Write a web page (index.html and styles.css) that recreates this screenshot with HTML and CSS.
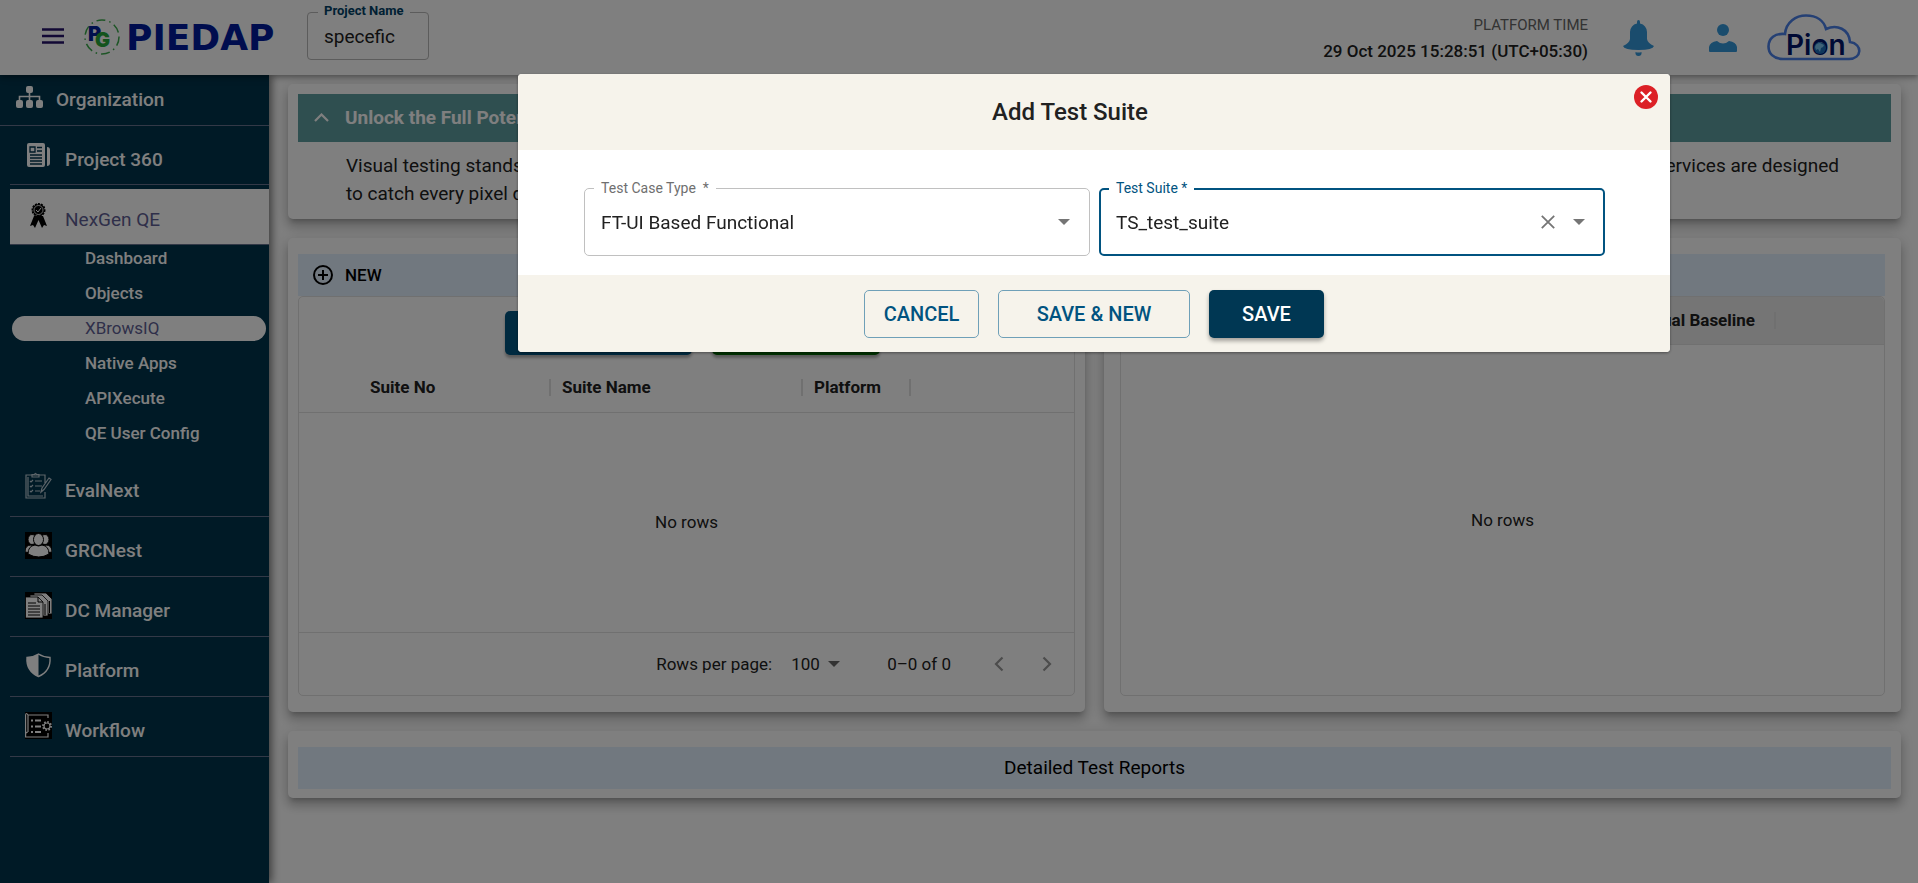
FILE: index.html
```html
<!DOCTYPE html>
<html lang="en">
<head>
<meta charset="utf-8">
<title>PIEDAP - XBrowsIQ</title>
<link rel="stylesheet" href="styles.css">
</head>
<body>
<header class="topbar">
  <button class="icon-btn menu" aria-label="Menu">
    <svg width="22" height="16" viewBox="0 0 22 16"><path d="M0 1.5h22M0 8h22M0 14.5h22" stroke="#24126a" stroke-width="2.4"/></svg>
  </button>
  <a class="brand" href="#" aria-label="PIEDAP">
    <svg width="200" height="44" viewBox="0 0 200 44">
      <circle cx="18" cy="21" r="17" fill="none" stroke="#3cab4c" stroke-width="1.5" stroke-dasharray="9 4 1.500 4"/>
      <text x="4" y="25" class="mark mark-p">P</text>
      <text x="11" y="31" class="mark mark-g">G</text>
      <text x="42" y="34" class="wordmark">PIEDAP</text>
    </svg>
  </a>
  <div class="project">
    <label for="project">Project Name</label>
    <input id="project" type="text" value="specefic">
  </div>
  <div class="clock"><span class="clock-label">PLATFORM TIME</span><span class="clock-value">29 Oct 2025 15:28:51 (UTC+05:30)</span></div>
  <button class="icon-btn bell" aria-label="Notifications">
    <svg width="31" height="36" viewBox="0 0 31 36"><path fill="#3498db" d="M14 2Q14 0 15.500 0T17 2V3.500Q23.500 5 24 12V19Q24.500 23 31 26Q30 30 15.500 30T0 26Q6.500 23 7 19V12Q7.500 5 14 3.500ZM12.500 32Q15.500 33 18.500 32Q19 36 15.500 36T12.500 32Z"/></svg>
  </button>
  <button class="icon-btn user" aria-label="Account">
    <svg width="28" height="28" viewBox="0 0 28 28"><circle cx="14" cy="6" r="6" fill="#3498db"/><path fill="#3498db" d="M0 27V23Q1 18 8 17Q14 22 20 17Q27 18 28 23V27Q28 28 27 28H1Q0 28 0 27Z"/></svg>
  </button>
  <svg class="pion" width="94" height="47" viewBox="0 0 94 47" role="img" aria-label="Pion">
    <path fill="none" stroke="#4a80e8" stroke-width="2.600" d="M16 45C6 45 1.500 39 1.500 32.500C1.500 24 8 19 18 20C19 8 29 1.500 39 1.500C50 1.500 57 7 59 15C70 10 82 15 83 28C96 30 95 45 82 45Z"/>
    <text x="19" y="41" class="pion-text">Pion</text>
    <circle cx="53" cy="34" r="6" fill="#1d6fb8"/><path d="M48 33q1-4 5-4l4 2-1 2-2 1-1 4-2-3-2 1z" fill="#7cc4f0"/>
  </svg>
</header>

<div class="shell">
  <nav class="sidebar">
    <a class="nav-org" href="#">
      <svg width="27" height="22" viewBox="0 0 27 22" fill="#fff"><rect x="10" width="7" height="7" rx="2"/><rect y="14" width="7" height="8" rx="2"/><rect x="10" y="14" width="7" height="8" rx="2"/><rect x="20" y="14" width="7" height="8" rx="2"/><path d="M13.500 6v9M3.500 15v-4.500h20V15" fill="none" stroke="#fff" stroke-width="1.600"/></svg>
      <span>Organization</span>
    </a>
    <a class="nav-item" href="#">
      <svg width="27" height="27" viewBox="0 0 27 27"><rect x="2" y="2" width="18" height="24" rx="2" fill="#fff"/><path d="M22 6q3 0 3 3v13q0 3-3 3z" fill="#fff"/><path d="M5 6h5v5H5zM12 6.500h5M12 10h5M5 14h12M5 17h12M5 20h12M5 23h12" fill="none" stroke="#00344e" stroke-width="1.300"/></svg>
      <span>Project 360</span>
    </a>
    <a class="nav-item active" href="#">
      <svg width="27" height="27" viewBox="0 0 27 27"><path d="M9 14L5 24l3-1 2 3 3.500-8 3.500 8 2-3 3 1-4-10z"/><circle cx="13.500" cy="8" r="6" stroke="#000" stroke-width="2" stroke-dasharray="2 1"/><circle cx="13.500" cy="8" r="4.500" fill="none" stroke="#fff" stroke-width=".8"/><path d="M11 8l2 2 3-4" stroke="#fff" fill="none"/></svg>
      <span>NexGen QE</span>
    </a>
    <div class="subnav">
      <a href="#">Dashboard</a><a href="#">Objects</a><a class="current" href="#">XBrowsIQ</a><a href="#">Native Apps</a><a href="#">APIXecute</a><a href="#">QE User Config</a>
    </div>
    <a class="nav-item" href="#">
      <svg width="27" height="27" viewBox="0 0 27 27" fill="none" stroke="#b8c8d2" stroke-width="1.200"><path d="M20 20v6H1V3h19v8M7 5V2.500h2.500q1-2.500 2 0H14V5zM3 5v19h15M5 9l1 1 2-2M10 9h7M5 14l1 1 2-2M10 14h7M5 19l1 1 2-2M10 19h5M16 20l1-4 7-10 2 1.500-7 10z"/></svg>
      <span>EvalNext</span>
    </a>
    <a class="nav-item" href="#">
      <svg width="27" height="27" viewBox="0 0 27 27"><path d="M0 0h27v27H0z"/><g fill="#fff" stroke="#000"><ellipse cx="7" cy="7.500" rx="4" ry="5"/><ellipse cx="20" cy="7.500" rx="4" ry="5"/><path d="M0 20q0-7 6-7l4 2-4 6zM27 20q0-7-6-7l-4 2 4 6z"/><ellipse cx="13.500" cy="7.500" rx="5" ry="6"/><path d="M3 22q0-8 7-9 3.500 2 7 0 7 1 7 9-10 6-21 0z"/></g></svg>
      <span>GRCNest</span>
    </a>
    <a class="nav-item" href="#">
      <svg width="27" height="27" viewBox="0 0 27 27"><path d="M0 0h27v27H0z"/><g fill="#fff" stroke="#000" stroke-width=".8"><path d="M9 1h12l6 6v15H9z"/><path d="M5 3h12l6 6v15H5z"/><path d="M.5 5H13l5 5v16H.5z"/></g><path d="M13 5v5h5M3 11h8M3 14h12M3 17h12M3 20h12M3 23h12M20 12v11M24.500 9v12" fill="none" stroke="#000"/></svg>
      <span>DC Manager</span>
    </a>
    <a class="nav-item" href="#">
      <svg width="27" height="27" viewBox="0 0 27 27"><path d="M13.500 2Q18 5 25 5.500Q26 19 13.500 24.500Q1 19 2 5.500Q9 5 13.500 2Z" fill="none" stroke="#fff" stroke-width="1.400"/><path d="M13.500 2v22.500Q1 19 2 5.500Q9 5 13.500 2Z" fill="#fff"/></svg>
      <span>Platform</span>
    </a>
    <a class="nav-item" href="#">
      <svg width="27" height="27" viewBox="0 0 27 27"><path d="M0 0h27v27H0z"/><g fill="none" stroke="#fff" stroke-width="1.200"><path d="M23 6V3H3v17M3 3Q1 0 .6 3v22H23v-4M3 20q-2.500 0-2.500 3"/><path d="M6 8.500h2M10 8.500h6M6 14.500h2M10 14.500h6M6 20h2M10 20h6" stroke-width="1.800"/><circle cx="22" cy="14" r="3"/><circle cx="22" cy="14" r="4" stroke-dasharray="1.600 1.500" stroke-width="2"/></g></svg>
      <span>Workflow</span>
    </a>
  </nav>

  <main class="content">
    <section class="card intro">
      <button class="intro-head"><svg width="15" height="9" viewBox="0 0 15 9"><path d="M1 8l6.500-6.500L14 8" fill="none" stroke="#fff" stroke-width="2.200"/></svg><span>Unlock the Full Potential</span></button>
      <div class="intro-body">
        <p class="spread"><span>Visual testing stands out</span><span>services are designed</span></p>
        <p>to catch every pixel detail.</p>
      </div>
    </section>

    <div class="columns">
      <section class="card suites">
        <div class="band"><button class="new-btn"><svg width="20" height="20" viewBox="0 0 20 20" fill="none" stroke="#000" stroke-width="2"><circle cx="10" cy="10" r="9"/><path d="M10 5v10M5 10h10"/></svg>NEW</button></div>
        <div class="grid">
          <div class="toolbar"><button class="tool blue" aria-label="Add suite"></button><button class="tool green" aria-label="Run suite"></button></div>
          <table class="suite-table">
            <colgroup><col class="c-no"><col class="c-name"><col class="c-platform"><col></colgroup>
            <thead><tr><th class="first"><span>Suite No</span></th><th><span>Suite Name</span></th><th><span>Platform</span></th><th class="rest"></th></tr></thead>
          </table>
          <div class="empty">No rows</div>
          <div class="pager">
            <label for="rows">Rows per page:</label>
            <span class="rows"><select id="rows"><option>100</option></select><svg width="12" height="6" viewBox="0 0 12 6"><path d="M0 0h12L6 6z" fill="#666"/></svg></span>
            <span class="range">0–0 of 0</span>
            <button class="icon-btn" aria-label="Previous page"><svg width="10" height="16" viewBox="0 0 10 16"><path d="M8.500 1.500L2 8l6.500 6.500" fill="none" stroke="#999" stroke-width="2.200"/></svg></button>
            <button class="icon-btn" aria-label="Next page"><svg width="10" height="16" viewBox="0 0 10 16"><path d="M1.500 1.500L8 8l-6.500 6.500" fill="none" stroke="#999" stroke-width="2.200"/></svg></button>
          </div>
        </div>
      </section>
      <section class="card baselines">
        <div class="band"></div>
        <div class="grid">
          <table class="base-table"><thead><tr><th><span>Visual Baseline</span></th></tr></thead></table>
          <div class="empty">No rows</div>
        </div>
      </section>
    </div>

    <section class="card reports"><h2 class="band">Detailed Test Reports</h2></section>
  </main>
</div>

<div class="overlay">
  <form class="dialog" role="dialog" aria-labelledby="dialog-title">
    <div class="dialog-head">
      <h1 id="dialog-title">Add Test Suite</h1>
      <button type="button" class="close" aria-label="Close"><svg width="24" height="24" viewBox="0 0 24 24"><circle cx="12" cy="12" r="12" fill="#dc2026"/><path d="M7.500 7.500l9 9M16.500 7.500l-9 9" stroke="#fff" stroke-width="2.400" stroke-linecap="round"/></svg></button>
    </div>
    <div class="dialog-body">
      <div class="field">
        <label for="case-type">Test Case Type &nbsp;*</label>
        <select id="case-type"><option>FT-UI Based Functional</option></select>
        <svg width="12" height="6" viewBox="0 0 12 6"><path d="M0 0h12L6 6z" fill="#757575"/></svg>
      </div>
      <div class="field focused">
        <label for="suite">Test Suite *</label>
        <input id="suite" type="text" value="TS_test_suite">
        <button type="button" class="icon-btn" aria-label="Clear"><svg width="14" height="14" viewBox="0 0 14 14"><path d="M.8.8l12.400 12.400M13.200.8L.8 13.200" stroke="#757575" stroke-width="1.800"/></svg></button>
        <svg width="12" height="6" viewBox="0 0 12 6"><path d="M0 0h12L6 6z" fill="#757575"/></svg>
      </div>
    </div>
    <div class="dialog-foot">
      <button type="button" class="btn">CANCEL</button>
      <button type="button" class="btn wide">SAVE &amp; NEW</button>
      <button type="submit" class="btn primary">SAVE</button>
    </div>
  </form>
</div>
</body>
</html>
```
FILE: styles.css
```css
* { box-sizing: border-box; }
body { margin: 0; font-family: Roboto, "Liberation Sans", sans-serif; font-size: 17px; color: #212121; background: #fff; overflow: hidden; }
button, input, select { font: inherit; color: inherit; border: 0; background: none; padding: 0; margin: 0; outline: 0; }
select { appearance: none; }
a { color: inherit; text-decoration: none; }
h1, h2, p { margin: 0; font-weight: 400; }
svg { display: block; flex: none; }
.icon-btn { display: flex; }

.topbar { position: relative; z-index: 2; display: flex; align-items: center; height: 75px; padding: 0 57px 0 42px; background: #fff; box-shadow: 0 2px 4px -1px rgba(0,0,0,.2), 0 4px 5px rgba(0,0,0,.14), 0 1px 10px rgba(0,0,0,.12); }
.menu { margin-right: 20px; padding-bottom: 4px; }
.brand { margin-right: 23px; }
.mark { font: 900 20px Inter, sans-serif; }
.mark-p { fill: #02209a; }
.mark-g { fill: #27a83a; }
.wordmark { font: 700 36px "DejaVu Sans", sans-serif; fill: #001a9c; }
.project { position: relative; width: 122px; height: 48px; margin-bottom: 3px; border: 1px solid #b8b8b8; border-radius: 4px; }
.project label { position: absolute; top: -11px; left: 10px; padding: 0 6px; line-height: 18px; font-size: 13px; font-weight: 700; color: #014167; background: #fff; white-space: nowrap; }
.project input { width: 100%; height: 100%; padding: 0 16px; font-size: 19px; }
.clock { display: flex; flex-direction: column; gap: 6px; margin-left: auto; text-align: right; line-height: 20px; }
.clock-label { font-size: 15px; color: #666; }
.clock-value { font-weight: 500; }
.bell { margin-left: 35px; }
.user { margin-left: 55px; }
.pion { margin-left: 30px; }
.pion-text { font: 600 28px Inter, sans-serif; fill: #00156a; }

.shell { display: flex; height: calc(100vh - 75px); }
.sidebar { position: relative; z-index: 1; flex: 0 0 269px; background: #00344c; color: #fff; font-weight: 500; box-shadow: 3px 0 8px rgba(0,0,0,.5); }
.nav-org { display: flex; align-items: center; gap: 13px; height: 51px; padding: 0 16px 2px; font-size: 19px; border-bottom: 1px solid #66738f; }
.nav-org svg { margin-bottom: 4px; }
.nav-item { display: flex; align-items: center; gap: 13px; height: 60px; margin-left: 10px; padding: 8px 15px 0; font-size: 19px; border-bottom: 1px solid #66738f; }
.nav-org + .nav-item { height: 59px; }
.nav-item svg { margin-bottom: 10px; }
.nav-item.active { height: 56px; margin-top: 4px; padding-top: 6px; background: #fff; color: #5f5f94; font-weight: 400; }
.nav-item.active svg { margin-bottom: 8px; }
.subnav { display: flex; flex-direction: column; gap: 10px; padding: 0 3px 7px 12px; }
.subnav a { padding-left: 73px; line-height: 25px; border-radius: 13px; }
.subnav a:first-child { padding-top: 1px; }
.subnav a:last-child { padding-bottom: 4px; }
.subnav .current { background: #fff; color: #5f5f94; font-weight: 400; }

.content { flex: 1; display: flex; flex-direction: column; gap: 19px; padding: 9px 17px 0 19px; }
.card { background: #fff; border-radius: 5px; box-shadow: 0 5px 5px -3px rgba(0,0,0,.2), 0 8px 10px 1px rgba(0,0,0,.14), 0 3px 14px 2px rgba(0,0,0,.12); }
.intro { padding: 10px 10px 11px; }
.intro-head { display: flex; align-items: center; gap: 16px; width: 100%; height: 48px; padding: 0 16px 1px; background: #5f9ea0; color: #fff; font-size: 19px; font-weight: 700; }
.intro-body { padding: 10px 52px 0 48px; font-size: 19px; line-height: 28px; }
.spread { display: flex; justify-content: space-between; }
.columns { display: grid; grid-template-columns: 1fr 1fr; gap: 19px; }
.suites { padding: 16px 10px; }
.baselines { padding: 16px; }
.band { height: 42px; background: #e3f0ff; }
.new-btn { display: flex; align-items: center; gap: 12px; height: 42px; padding: 0 15px; font-weight: 500; color: #000; }
.grid { display: flex; flex-direction: column; height: 400px; border: 1px solid #e0e0e0; border-radius: 5px; }
.toolbar { display: flex; justify-content: center; gap: 20px; height: 67px; padding: 14px 0 0 12px; }
.tool { width: 187px; height: 44px; border-radius: 5px; box-shadow: 0 3px 3px rgba(0,0,0,.3); }
.blue { background: #005580; }
.green { width: 168px; background: #006400; }
table { width: 100%; border-collapse: collapse; table-layout: fixed; border-bottom: 1px solid #e0e0e0; }
th { padding: 0; text-align: left; font-weight: 700; }
th span { display: block; padding-left: 11px; line-height: 17px; border-right: 2px solid #e0e0e0; }
.suite-table tr { height: 48px; }
.c-no { width: 252px; }
.c-name { width: 252px; }
.c-platform { width: 108px; }
.first span { padding-left: 71px; }
.base-table { background: #ebebeb; border-radius: 5px 5px 0 0; }
.base-table tr { height: 47px; }
.base-table span { width: 655px; padding-right: 19px; text-align: right; }
.empty { flex: 1; display: flex; align-items: center; justify-content: center; }
.pager { display: flex; align-items: center; height: 63px; padding: 0 22px; justify-content: flex-end; border-top: 1px solid #e0e0e0; }
.rows { display: flex; align-items: center; gap: 8px; margin: 0 47px 0 19px; }
.range { margin-right: 43px; }
.pager .icon-btn + .icon-btn { margin-left: 38px; }
.reports { padding: 16px 10px 9px; }
.reports .band { line-height: 42px; font-size: 19px; text-align: center; color: #000; }

.overlay { position: fixed; inset: 0; z-index: 10; display: flex; justify-content: center; align-items: flex-start; padding: 74px 0 0 270px; background: rgba(0,0,0,.5); }
.dialog { width: calc(60vw + 1px); border-radius: 4px; overflow: hidden; background: #fff; box-shadow: 0 1px 3px rgba(0,0,0,.4); }
.dialog-head { position: relative; height: 76px; padding-right: 48px; background: #f6f3eb; text-align: center; }
.dialog-head h1 { font-size: 24px; font-weight: 500; line-height: 76px; }
.close { position: absolute; top: 11px; right: 12px; }
.dialog-body { display: grid; grid-template-columns: 1fr 1fr; gap: 9px; padding: 38px 65px 19px 66px; }
.field { position: relative; display: flex; align-items: center; height: 68px; padding: 0 19px 0 16px; border: 1px solid #c0c0c0; border-radius: 5px; font-size: 19px; }
.field.focused { padding: 0 18px 0 15px; border: 2px solid #015380; }
.field label { position: absolute; top: -11px; left: 9px; padding: 0 7px; line-height: 20px; font-size: 14px; color: #6f6f6f; background: #fff; }
.field.focused label { top: -12px; left: 8px; color: #015380; }
.field select, .field input { flex: 1; min-width: 0; }
.field .icon-btn { margin-right: 18px; }
.dialog-foot { display: flex; justify-content: center; gap: 19px; padding: 15px 0 14px; background: #f6f3eb; }
.btn { width: 115px; height: 48px; border: 1px solid #6fa0b8; border-radius: 5px; font-size: 20px; font-weight: 500; color: #015380; }
.btn.wide { width: 192px; }
.btn.primary { border: 0; background: #003753; color: #fff; box-shadow: 0 3px 4px rgba(0,0,0,.35); }
```
